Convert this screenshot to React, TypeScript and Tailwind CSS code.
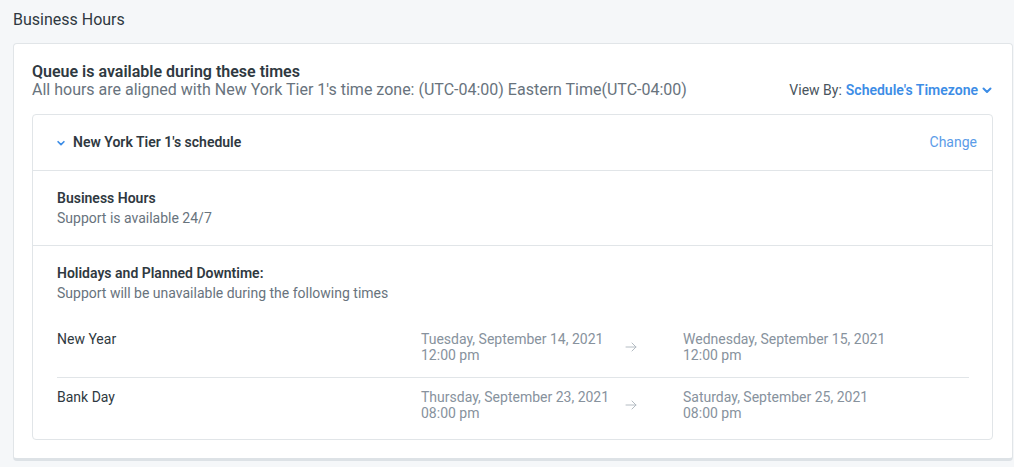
import React from "react";

const holidays = [
  {
    name: "New Year",
    startDate: "Tuesday, September 14, 2021",
    startTime: "12:00 pm",
    endDate: "Wednesday, September 15, 2021",
    endTime: "12:00 pm",
  },
  {
    name: "Bank Day",
    startDate: "Thursday, September 23, 2021",
    startTime: "08:00 pm",
    endDate: "Saturday, September 25, 2021",
    endTime: "08:00 pm",
  },
];

const ChevronDown = ({ className }: { className?: string }) => (
  <svg className={className} viewBox="0 0 12 12" fill="none" stroke="currentColor" strokeWidth="2" strokeLinecap="round" strokeLinejoin="round">
    <path d="M2.5 4.5 6 8l3.5-3.5" />
  </svg>
);

const App = () => {
  return (
    <div className="min-h-[467px] w-[1014px] bg-[#f5f7f9] px-[13px] pt-[9px] font-['Roboto',_'Liberation_Sans',_sans-serif] text-[#2f3941]">
      <h1 className="text-[16px] leading-[22px] text-[#2f3941]">Business Hours</h1>

      <div className="mt-[12px] w-[1000px] rounded-[4px] border border-[#e1e5e8] border-b-[3px] border-b-[#dde2e6] bg-white pl-[18px] pr-[19px] pb-[18px] pt-[19px]">
        <div className="flex items-end justify-between">
          <div>
            <h2 className="text-[16px] font-semibold leading-[18px] text-[#2f3941]">Queue is available during these times</h2>
            <p className="text-[16px] leading-[18px] text-[#68737d]">
              All hours are aligned with New York Tier 1's time zone: (UTC-04:00) Eastern Time(UTC-04:00)
            </p>
          </div>
          <div className="flex items-center text-[14px] leading-[18px]">
            <span className="text-[#49545c]">View By:</span>
            <button className="ml-[4px] flex items-center font-semibold text-[#3d8de6]">
              Schedule's Timezone
              <ChevronDown className="ml-[3px] h-[12px] w-[12px]" />
            </button>
          </div>
        </div>

        <div className="mt-[15px] rounded-[4px] border border-[#e1e5e8] bg-white">
          <div className="flex h-[56px] items-center justify-between border-b border-[#e1e5e8] pl-[23px] pr-[15px]">
            <div className="flex items-center">
              <ChevronDown className="h-[10px] w-[10px] text-[#3d8de6]" />
              <span className="ml-[7px] text-[14px] font-semibold text-[#2f3941]">New York Tier 1's schedule</span>
            </div>
            <button className="text-[14px] text-[#5b9ce8]">Change</button>
          </div>

          <div className="border-b border-[#e1e5e8] px-[24px] pb-[17px] pt-[17px] text-[14px] leading-[20px]">
            <h3 className="font-semibold text-[#2f3941]">Business Hours</h3>
            <p className="text-[#68737d]">Support is available 24/7</p>
          </div>

          <div className="px-[24px] pt-[17px] text-[14px] leading-[20px]">
            <h3 className="font-semibold text-[#2f3941]">Holidays and Planned Downtime:</h3>
            <p className="text-[#68737d]">Support will be unavailable during the following times</p>

            <div className="mt-[28px] w-[912px]">
              {holidays.map((h, i) => (
                <div
                  key={h.name}
                  className={`flex text-[14px] leading-[16px] ${i === 0 ? "border-b border-[#e1e5e8] pb-[14px]" : "pt-[11px] pb-[18px]"}`}
                >
                  <div className="w-[364px] text-[#2f3941]">{h.name}</div>
                  <div className="w-[200px] text-[#87929d]">
                    <div>{h.startDate}</div>
                    <div>{h.startTime}</div>
                  </div>
                  <div className="flex w-[62px] items-center text-[#b4bcc3]">
                    <svg className="ml-[4px] h-[12px] w-[12px]" viewBox="0 0 12 12" fill="none" stroke="currentColor" strokeWidth="1" strokeLinecap="round" strokeLinejoin="round">
                      <path d="M1 6h10M7 2l4 4-4 4" />
                    </svg>
                  </div>
                  <div className="text-[#87929d]">
                    <div>{h.endDate}</div>
                    <div>{h.endTime}</div>
                  </div>
                </div>
              ))}
            </div>
          </div>
        </div>
      </div>
    </div>
  );
};

export default App;
